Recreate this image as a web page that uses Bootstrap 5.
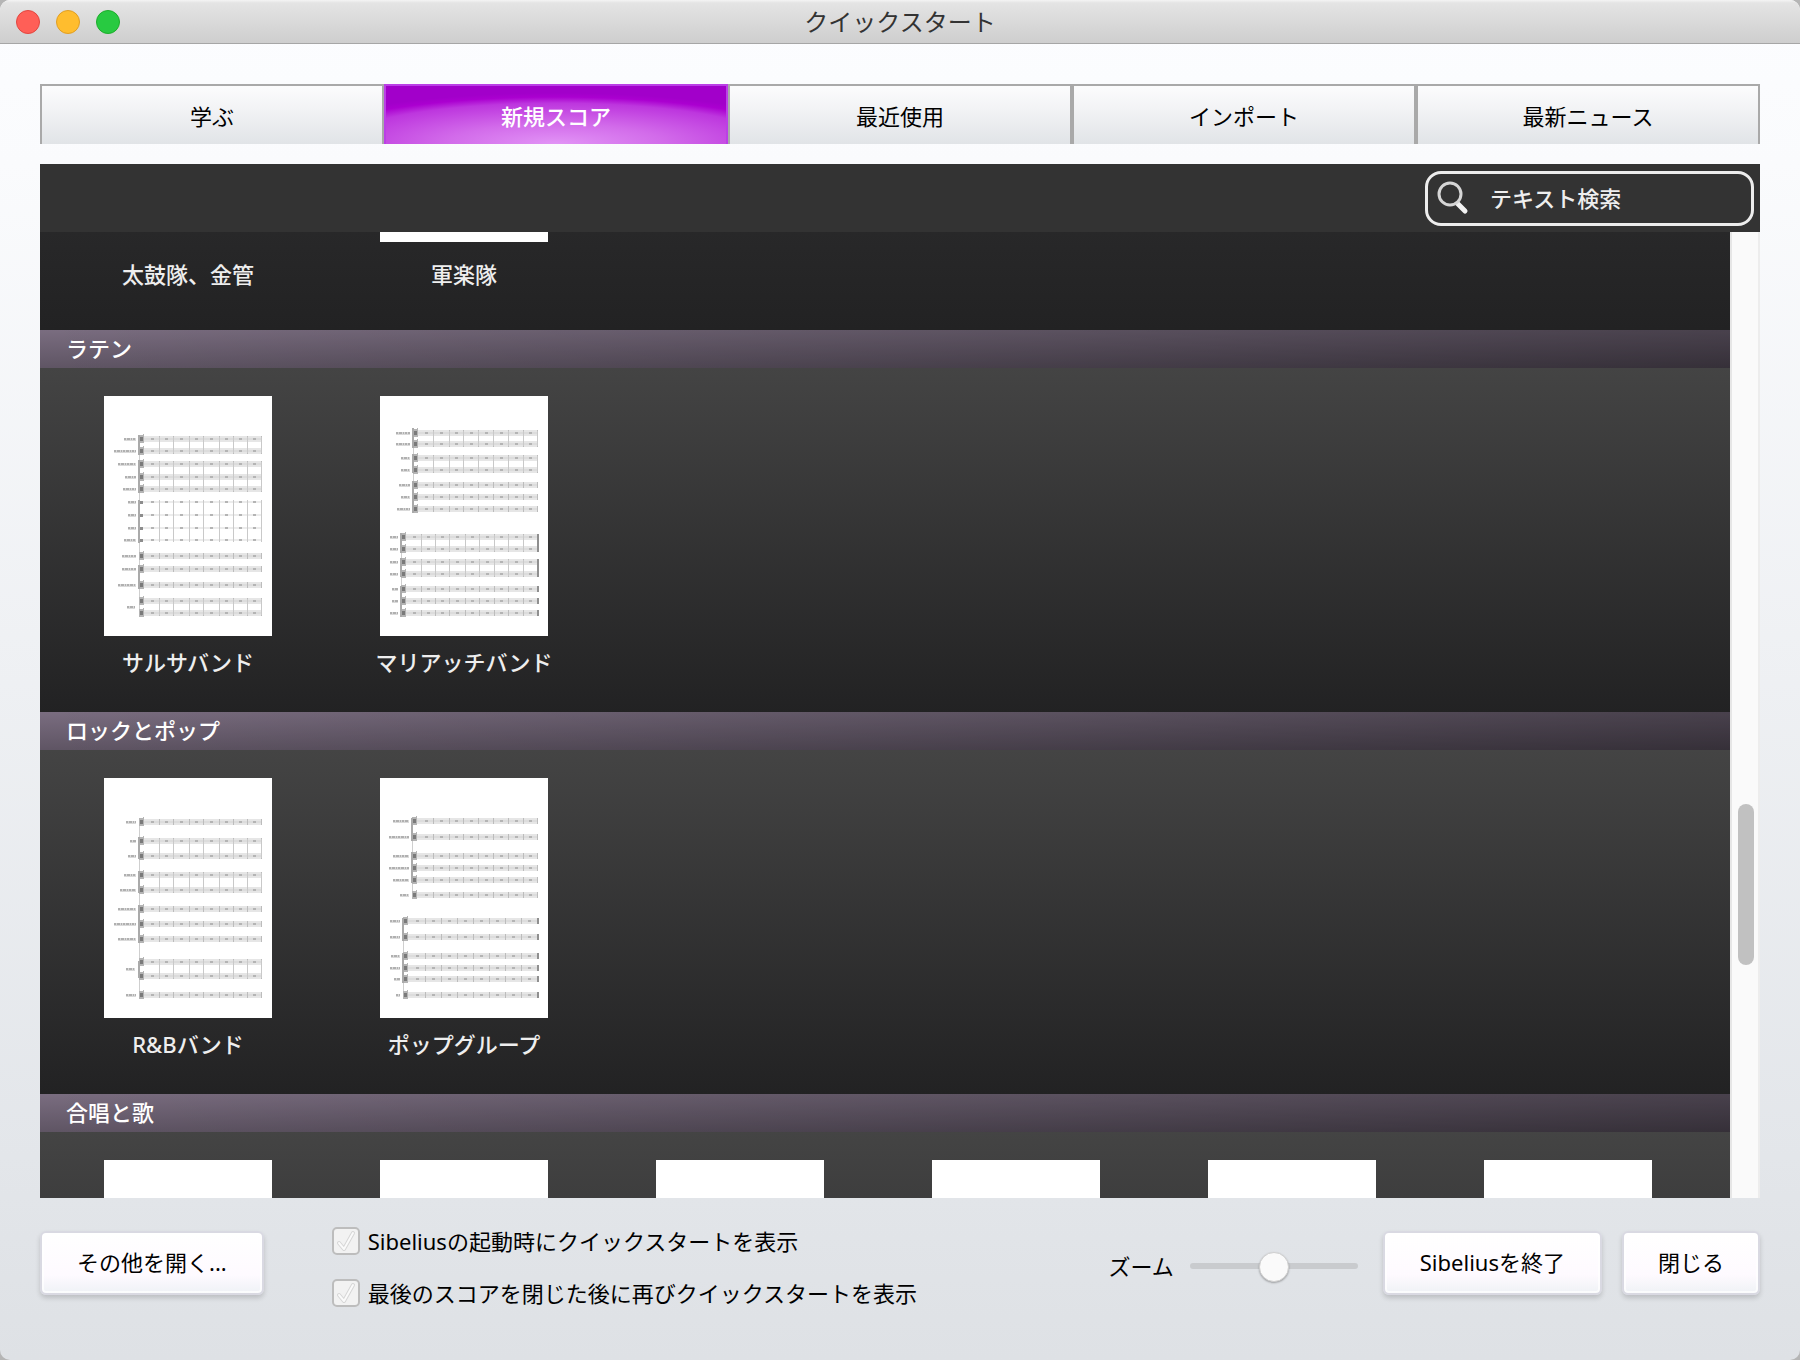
<!DOCTYPE html>
<html lang="ja">
<head>
<meta charset="utf-8">
<meta name="viewport" content="width=device-width, initial-scale=1">
<title>クイックスタート</title>
<link href="https://cdn.jsdelivr.net/npm/bootstrap@5.3.0/dist/css/bootstrap.min.css" rel="stylesheet">
<style>
  html { background: #b5b5b5; }
  body { font-family: "Noto Sans", "Noto Sans CJK JP", sans-serif; font-size: 22px; line-height: 32px; color: #000; background: transparent; }
  .app-window { height: 100vh; border-radius: 10px; overflow: hidden; background: linear-gradient(#fcfdff 0, #fafbfd 12%, #e3e6ea 85%, #dee1e5 100%); }
  .title-bar { height: 44px; background: linear-gradient(#f4f4f4 0, #e4e4e4 3px, #cecece 100%); border-bottom: 1px solid #a6a6a6; padding: 0 16px; }
  .title-bar h1 { font-size: 24px; line-height: 32px; color: #333; font-weight: 400; }
  .lights { gap: 16px; flex: 1 1 0; }
  .light { width: 24px; height: 24px; border-radius: 50%; border: 1px solid; padding: 0; }
  .light-close { background: #ff5f57; border-color: #e2463f; }
  .light-min { background: #ffbd2e; border-color: #e09e23; }
  .light-zoom { background: #28ca41; border-color: #1dad2b; }
  .window-body { padding: 40px 40px 51px; min-height: 0; }

  .start-tabs { margin-bottom: 20px; }
  .start-tabs .nav-link { height: 60px; border: 2px solid #a9a9a9; border-bottom: 0; border-radius: 0; padding: 2px 0 0; color: #000; background: linear-gradient(#fcfcfd, #f2f3f5 40%, #e1e4e7); }
  .start-tabs .nav-link.active { color: #fff; font-weight: 500; border-color: #bb3fe6; background: radial-gradient(ellipse 80% 88% at 50% 100%, #e294f6 0, #d26bea 40%, #bd36de 80%, #ab00d0 92%, #a200ca 100%); }

  .panel-bar { height: 68px; background: #333; padding: 0 6px; }
  .search-box { width: 329px; height: 55px; border: 3px solid #ededed; border-radius: 16px; padding-left: 8px; gap: 18px; }
  .search-box input { background: transparent; border: 0; color: #eee; font-size: 22px; line-height: 32px; font-weight: 500; padding: 0; outline: 0; }
  .search-box input::placeholder { color: #eee; opacity: 1; }

  .list-row { min-height: 0; }
  .score-list { overflow: hidden; background: #222; }
  .group-title { height: 38px; margin: 0; padding-left: 26px; font-size: 22px; line-height: 36px; font-weight: 500; color: #fff; background: linear-gradient(to right, rgba(0,0,0,0) 0, rgba(0,0,0,.28) 100%), linear-gradient(179deg, #7a6d80, #4a424e); }
  .group-body { height: 344px; padding: 28px 10px 0; background: linear-gradient(#444, #222223); color: #eee; font-weight: 500; }
  .group-scrolled { height: 98px; padding-top: 0; background: linear-gradient(#282829, #222223); }
  .score-item { width: 276px; gap: 10px; }
  .group-scrolled .score-item { gap: 16px; }
  .page-thumb { width: 168px; height: 240px; background: #fff; display: block; flex: none; }
  .page-edge { height: 10px; }
  .page-out { height: 10px; background: transparent; }

  .scroll-rail { width: 30px; background: #fafafa; border-left: 2px solid #e6e6e6; border-right: 2px solid #ededed; }
  .scroll-thumb { width: 16px; height: 161px; margin: 572px auto 0 6px; border-radius: 8px; background: #c1c1c1; }

  .bottom-bar { padding-top: 27px; }
  .soft-btn { height: 64px; margin-top: 6px; font-size: 22px; line-height: 32px; color: #000; padding: 0 34px 2px; border: 2px solid #d9d9e2; border-radius: 6px; background: linear-gradient(#fff, #fefaff 70%, #eff2f6); box-shadow: inset 0 0 0 2px rgba(255,255,255,.7), 0 3px 5px rgba(0,0,0,.16); }
  .soft-btn-wide { padding-left: 35px; padding-right: 35px; }
  .soft-btn:hover { background: #fff; color: #000; border-color: #d9d9e2; }
  .start-options { margin-left: 68px; gap: 20px; }
  .start-options label { padding-left: 8px; }
  .tick { width: 28px; height: 28px; flex: none; margin: 0; }
  .tick.form-check-input, .tick.form-check-input:checked { border: 2px solid #bdbdbd; border-radius: 5px; background-color: #f2f2f2; background-size: 24px 24px; background-image: url("data:image/svg+xml,%3Csvg xmlns='http://www.w3.org/2000/svg' viewBox='0 0 24 24' fill='none' stroke-linecap='round' stroke-linejoin='round'%3E%3Cpath d='M5 14l5 6L19 4' stroke='%23d6d6d6' stroke-width='4'/%3E%3Cpath d='M5 14l5 6L19 4' stroke='%23fafafa' stroke-width='2'/%3E%3C/svg%3E"); }
  .zoom-group { gap: 16px; margin-right: 25px; padding-top: 25px; }
  .zoom-range { width: 168px; height: 32px; }
  .zoom-range::-webkit-slider-runnable-track { height: 6px; border-radius: 3px; background: #c9cbce; }
  .zoom-range::-webkit-slider-thumb { width: 30px; height: 30px; margin-top: -11px; background: #fafafa; border: 1px solid #d0d0d0; box-shadow: 0 1px 2px rgba(0,0,0,.3); }
  .end-buttons { gap: 20px; }
</style>
</head>
<body>
<div class="app-window d-flex flex-column">
  <header class="title-bar d-flex align-items-center flex-shrink-0">
    <div class="lights d-flex">
      <button type="button" class="light light-close" aria-label="閉じる"></button>
      <button type="button" class="light light-min" aria-label="しまう"></button>
      <button type="button" class="light light-zoom" aria-label="拡大"></button>
    </div>
    <h1 class="m-0">クイックスタート</h1>
    <div class="lights"></div>
  </header>

  <main class="window-body d-flex flex-column flex-grow-1">
    <ul class="start-tabs nav nav-justified flex-nowrap list-unstyled">
      <li class="nav-item"><button type="button" class="nav-link w-100">学ぶ</button></li>
      <li class="nav-item"><button type="button" class="nav-link w-100 active">新規スコア</button></li>
      <li class="nav-item"><button type="button" class="nav-link w-100">最近使用</button></li>
      <li class="nav-item"><button type="button" class="nav-link w-100">インポート</button></li>
      <li class="nav-item"><button type="button" class="nav-link w-100">最新ニュース</button></li>
    </ul>

    <div class="panel-bar d-flex align-items-center justify-content-end flex-shrink-0">
      <div class="search-box d-flex align-items-center">
        <svg width="36" height="36" viewBox="0 0 36 36" fill="none" aria-hidden="true">
          <path d="M20 22l9 9" stroke="#f2f2f2" stroke-width="5" stroke-linecap="round"/>
          <circle cx="14" cy="14" r="11" fill="#333" stroke="#d6d6d6" stroke-width="3"/>
        </svg>
        <input class="flex-grow-1 w-50" type="text" placeholder="テキスト検索" aria-label="テキスト検索">
      </div>
    </div>

    <div class="list-row d-flex flex-grow-1">
      <div class="score-list flex-grow-1">
        <div class="group-body group-scrolled d-flex">
          <div class="score-item d-flex flex-column align-items-center"><div class="page-thumb page-out"></div><span>太鼓隊、金管</span></div>
          <div class="score-item d-flex flex-column align-items-center"><div class="page-thumb page-edge"></div><span>軍楽隊</span></div>
        </div>
        <h2 class="group-title">ラテン</h2>
        <div class="group-body d-flex">
          <div class="score-item d-flex flex-column align-items-center"><svg class="page-thumb" viewBox="0 0 168 240" data-score="salsa"></svg><span>サルサバンド</span></div>
          <div class="score-item d-flex flex-column align-items-center"><svg class="page-thumb" viewBox="0 0 168 240" data-score="mariachi"></svg><span>マリアッチバンド</span></div>
        </div>
        <h2 class="group-title">ロックとポップ</h2>
        <div class="group-body d-flex">
          <div class="score-item d-flex flex-column align-items-center"><svg class="page-thumb" viewBox="0 0 168 240" data-score="rnb"></svg><span>R&amp;Bバンド</span></div>
          <div class="score-item d-flex flex-column align-items-center"><svg class="page-thumb" viewBox="0 0 168 240" data-score="pop"></svg><span>ポップグループ</span></div>
        </div>
        <h2 class="group-title">合唱と歌</h2>
        <div class="group-body d-flex">
          <div class="score-item d-flex justify-content-center"><div class="page-thumb"></div></div>
          <div class="score-item d-flex justify-content-center"><div class="page-thumb"></div></div>
          <div class="score-item d-flex justify-content-center"><div class="page-thumb"></div></div>
          <div class="score-item d-flex justify-content-center"><div class="page-thumb"></div></div>
          <div class="score-item d-flex justify-content-center"><div class="page-thumb"></div></div>
          <div class="score-item d-flex justify-content-center"><div class="page-thumb"></div></div>
        </div>
      </div>
      <div class="scroll-rail flex-shrink-0"><div class="scroll-thumb"></div></div>
    </div>

    <footer class="bottom-bar d-flex align-items-start flex-shrink-0">
      <button type="button" class="btn soft-btn soft-btn-wide">その他を開く...</button>
      <div class="start-options d-flex flex-column">
        <div class="d-flex align-items-center"><input class="form-check-input tick" type="checkbox" id="showAtLaunch" checked><label for="showAtLaunch">Sibeliusの起動時にクイックスタートを表示</label></div>
        <div class="d-flex align-items-center"><input class="form-check-input tick" type="checkbox" id="showAfterClose" checked><label for="showAfterClose">最後のスコアを閉じた後に再びクイックスタートを表示</label></div>
      </div>
      <div class="zoom-group d-flex align-items-center ms-auto">
        <label for="zoomRange">ズーム</label>
        <input type="range" class="form-range zoom-range" id="zoomRange" min="0" max="100" value="50">
      </div>
      <div class="end-buttons d-flex">
        <button type="button" class="btn soft-btn soft-btn-wide">Sibeliusを終了</button>
        <button type="button" class="btn soft-btn">閉じる</button>
      </div>
    </footer>
  </main>
</div>

<script src="https://cdn.jsdelivr.net/npm/bootstrap@5.3.0/dist/js/bootstrap.bundle.min.js"></script>
<script>
  // Each system: left edge, barline positions, staves [y, nameWidth, single-line?],
  // staves joined by barlines, and bracket spans.
  const full = [55, 69, 85, 99, 115, 129, 143, 157];
  const upper = [53, 69, 83, 98, 113, 128, 143, 157];
  const lower = [41, 55, 69, 85, 99, 114, 128, 143, 157];
  const popLower = [45, 61, 77, 93, 109, 125, 141, 157];
  const scores = {
    salsa: [{ x: 35, bars: full,
      staves: [[43,12],[55,22],[68,18],[81,11],[93,13],[106,8,1],[119,8,1],[132,8,1],[144,12,1],[160,14],[173,14],[189,18],[205,0],[217,0]],
      joins: [[43,55],[68,93],[106,144],[205,217]], brackets: [[39,59],[64,97],[104,147],[169,193]], names: [[211,8]] }],
    mariachi: [{ x: 33, bars: upper,
      staves: [[37,14],[48,14],[62,9],[74,9],[89,11],[101,9],[113,13]],
      joins: [[37,48],[62,74]], brackets: [[32,52],[58,77],[85,117]] },
      { x: 21, bars: lower, end: 1,
      staves: [[141,8],[153,8],[166,8],[178,8],[193,6],[205,6],[217,8]],
      joins: [[141,153],[166,178]], brackets: [[137,157],[162,181],[190,221]] }],
    rnb: [{ x: 35, bars: full,
      staves: [[44,10],[63,6],[78,8],[97,12],[112,16],[131,18],[146,22],[161,18],[184,0],[198,0],[217,10]],
      joins: [[63,78],[97,112],[184,198]], brackets: [[59,81],[93,115],[127,165],[183,200]], names: [[191,9]] }],
    pop: [{ x: 32, bars: upper,
      staves: [[43,16],[59,20],[78,16],[90,20],[102,16],[117,9]],
      joins: [], brackets: [[40,63],[74,105]] },
      { x: 23, bars: popLower, end: 1,
      staves: [[143,10],[159,10],[178,9],[190,10],[201,6],[217,4]],
      joins: [], brackets: [[140,163],[175,205]] }]
  };
  const rect = (x, y, w, h, fill) => `<rect x="${x}" y="${y}" width="${w}" height="${h}" fill="${fill}"/>`;
  const name = (right, y, w) => w ? rect(right - w, y - 1, w, 3, '#dadada') +
    `<path d="M${right - w} ${y}h${w}" stroke="#b0b0b0" stroke-width="2" stroke-dasharray="2 1 3 1 1 1"/>` : '';
  document.querySelectorAll('[data-score]').forEach(svg => {
    svg.innerHTML = scores[svg.dataset.score].map(s => {
      const ys = s.staves.map(v => v[0]);
      let out = rect(s.x, ys[0] - 4, 1, ys[ys.length - 1] - ys[0] + 6, '#cfcfcf');
      s.staves.forEach(([y, w, thin]) => {
        out += thin ? rect(s.x, y - 1, 158 - s.x, 2, '#ececec')
                    : rect(s.x, y - 3, 158 - s.x, 6, '#e6e6e6') + rect(s.x, y - 1, 158 - s.x, 2, '#dcdcdc');
        out += thin ? rect(s.x + 1, y - 1, 3, 3, '#8c8c8c')
                    : rect(s.x, y - 4, 5, 8, '#b4b4b4') + rect(s.x + 1, y - 2, 3, 4, '#7a7a7a') + rect(s.x + 4, y - 5, 1, 6, '#b4b4b4');
        let prev = s.x + 6;
        s.bars.forEach(b => {
          out += rect(Math.round((prev + b) / 2) - 1, y - 1, 3, 2, '#b4b4b4');
          if (!thin) out += rect(b, y - 3, 1, 6, '#bcbcbc');
          prev = b;
        });
        if (s.end) out += rect(157, y - 3, 2, 6, '#8f8f8f');
        out += name(s.x - 3, y, w);
      });
      s.joins.forEach(([a, b]) => {
        s.bars.forEach(x => { out += rect(x, a - 2, 1, b - a + 4, '#c9c9c9'); });
        if (s.end) out += rect(157, a - 3, 2, b - a + 6, '#8f8f8f');
      });
      s.brackets.forEach(([a, b]) => { out += rect(s.x - 1, a, 2, b - a, '#aaaaaa'); });
      (s.names || []).forEach(([y, w]) => { out += name(s.x - 4, y, w); });
      return out;
    }).join('');
  });
</script>
</body>
</html>
